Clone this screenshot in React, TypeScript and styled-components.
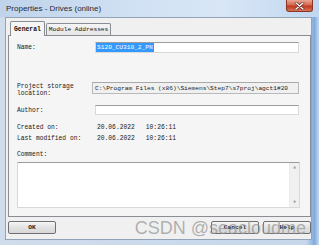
import styled, { createGlobalStyle } from "styled-components";

const GlobalStyle = createGlobalStyle`
    * {
        box-sizing: border-box;
    }
    body {
        margin: 0;
        background: #ffffff;
    }
`;

export default function App() {
    return (
        <>
            <GlobalStyle />
            <Window>
                <TitleBar>
                    <Title>Properties - Drives (online)</Title>
                    <CloseButton aria-label="Close">
                        <svg width="11" height="8" viewBox="0 0 11 8">
                            <path d="M2 1 L9 7 M9 1 L2 7" stroke="#5a1a10" strokeWidth="2.6" strokeLinecap="round" />
                            <path d="M2 1 L9 7 M9 1 L2 7" stroke="#ffffff" strokeWidth="1.5" strokeLinecap="round" />
                        </svg>
                    </CloseButton>
                </TitleBar>
                <ClientArea>
                    <TabStrip>
                        <Tab $active>General</Tab>
                        <Tab>Module Addresses</Tab>
                    </TabStrip>
                    <TabPanel>
                        <Row $top={6} $h={11}>
                            <Label>Name:</Label>
                            <Field $w={204}>
                                <Selected>S120_CU310_2_PN</Selected>
                            </Field>
                        </Row>
                        <Row $top={29} $h={12}>
                            <Label $w={75} $stacked>
                                Project storage
                                <br />
                                location:
                            </Label>
                            <Field $w={207} $readOnly>
                                {"C:\\Program Files (x86)\\Siemens\\Step7\\s7proj\\agct1#20"}
                            </Field>
                        </Row>
                        <Row $top={11} $h={10}>
                            <Label>Author:</Label>
                            <Field $w={204} />
                        </Row>
                        <Row $top={8} $h={9}>
                            <Label $w={80}>Created on:</Label>
                            <Stamp>
                                <span>20.06.2022</span>
                                <span>10:26:11</span>
                            </Stamp>
                        </Row>
                        <Row $top={2} $h={9}>
                            <Label $w={80}>Last modified on:</Label>
                            <Stamp>
                                <span>20.06.2022</span>
                                <span>10:26:11</span>
                            </Stamp>
                        </Row>
                        <Row $top={7} $h={9}>
                            <Label>Comment:</Label>
                        </Row>
                        <CommentBox>
                            <CommentText />
                            <ScrollBar>
                                <Arrow>▲</Arrow>
                                <Arrow>▼</Arrow>
                            </ScrollBar>
                        </CommentBox>
                    </TabPanel>
                    <ButtonRow>
                        <DialogButton>OK</DialogButton>
                        <RightButtons>
                            <DialogButton>Cancel</DialogButton>
                            <DialogButton>Help</DialogButton>
                        </RightButtons>
                    </ButtonRow>
                </ClientArea>
                <Watermark>CSDN @seacloudme</Watermark>
            </Window>
        </>
    );
}

const Window = styled.div`
    position: relative;
    width: 319px;
    height: 245px;
    overflow: hidden;
    display: flex;
    flex-direction: column;
    padding: 0 7px 5px 5px;
    background: linear-gradient(
        to right,
        #cfdcec 0,
        #c6d7eb 96%,
        #9fbfe4 97.5%,
        #7fa9dc 98.5%,
        #c4d8f0 100%
    );
`;

const TitleBar = styled.div`
    height: 17px;
    flex: 0 0 17px;
    margin: 0 -7px 0 -5px;
    padding-left: 6px;
    display: flex;
    justify-content: space-between;
    align-items: flex-start;
    background: linear-gradient(to right, #bfd3eb 0, #d2e2f4 45%, #d8e6f6 70%, #c1d7f0 100%);
`;

const Title = styled.div`
    padding-top: 4px;
    font-family: "Liberation Sans", Arial, sans-serif;
    font-size: 8px;
    line-height: 10px;
    color: #1e2a38;
`;

const CloseButton = styled.div`
    width: 27px;
    height: 12px;
    margin-right: 6px;
    display: flex;
    align-items: center;
    justify-content: center;
    border: 1px solid #8d3424;
    border-top: none;
    border-radius: 0 0 3px 3px;
    background: linear-gradient(to bottom, #e9a694 0, #d46a52 45%, #c1391f 55%, #d7735c 100%);
`;

const ClientArea = styled.div`
    flex: 1;
    display: flex;
    flex-direction: column;
    border: 1px solid #92a3b8;
    background: #f0f0f0;
`;

const TabStrip = styled.div`
    display: flex;
    align-items: flex-end;
    height: 15px;
    margin: 3px 0 0 4px;
`;

const Tab = styled.div<{ $active?: boolean }>`
    position: relative;
    z-index: ${(p) => (p.$active ? 1 : 0)};
    height: ${(p) => (p.$active ? 15 : 12)}px;
    margin-bottom: ${(p) => (p.$active ? 0 : 1)}px;
    padding: 0 ${(p) => (p.$active ? 3 : 2)}px;
    display: flex;
    align-items: center;
    border: 1px solid #8a8d94;
    border-bottom: none;
    border-radius: 2px 2px 0 0;
    background: ${(p) => (p.$active ? "#f5f5f5" : "linear-gradient(#f4f4f4, #e6e6e6)")};
    font-family: "Liberation Mono", monospace;
    font-size: ${(p) => (p.$active ? 6.4 : 6.2)}px;
    font-weight: ${(p) => (p.$active ? 700 : 400)};
    color: #111;
    & + & {
        margin-left: 1px;
    }
`;

const TabPanel = styled.div`
    margin: -1px 0 0 2px;
    width: 303px;
    height: 182px;
    padding: 0 0 0 8px;
    border: 1px solid #8a8d94;
    background: #f5f5f5;
`;

const Row = styled.div<{ $top: number; $h: number }>`
    display: flex;
    align-items: center;
    margin-top: ${(p) => p.$top}px;
    height: ${(p) => p.$h}px;
`;

const Label = styled.div<{ $w?: number; $stacked?: boolean }>`
    width: ${(p) => p.$w ?? 78}px;
    flex: 0 0 auto;
    margin-top: ${(p) => (p.$stacked ? 4 : 0)}px;
    font-family: "Liberation Mono", monospace;
    font-size: 6.3px;
    line-height: 7px;
    color: #1a1a1a;
    white-space: nowrap;
`;

const Field = styled.div<{ $w: number; $readOnly?: boolean }>`
    width: ${(p) => p.$w}px;
    height: 100%;
    display: flex;
    align-items: center;
    padding-left: ${(p) => (p.$readOnly ? 2 : 0)}px;
    border: 1px solid ${(p) => (p.$readOnly ? "#b9b9b9" : "#d9d9d9")};
    border-top-color: ${(p) => (p.$readOnly ? "#a9a9a9" : "#9c9c9c")};
    background: ${(p) => (p.$readOnly ? "#f0f0f0" : "#ffffff")};
    font-family: "Liberation Mono", monospace;
    font-size: 6.2px;
    color: #1a1a1a;
    white-space: nowrap;
    overflow: hidden;
`;

const Selected = styled.span`
    align-self: stretch;
    display: flex;
    align-items: center;
    padding: 0 1px;
    background: #3399ff;
    color: #ffffff;
`;

const Stamp = styled.div`
    display: flex;
    gap: 11px;
    font-family: "Liberation Mono", monospace;
    font-size: 6.3px;
    color: #1a1a1a;
`;

const CommentBox = styled.div`
    display: flex;
    margin-top: 3px;
    width: 283px;
    height: 46px;
    border: 1px solid #d9d9d9;
    border-top-color: #9c9c9c;
    background: #ffffff;
`;

const CommentText = styled.div`
    flex: 1;
`;

const ScrollBar = styled.div`
    width: 10px;
    display: flex;
    flex-direction: column;
    justify-content: space-between;
    align-items: center;
    padding: 2px 0;
    background: #f0f0f0;
    border-left: 1px solid #ececec;
`;

const Arrow = styled.span`
    font-family: "DejaVu Sans", sans-serif;
    font-size: 3.5px;
    line-height: 5px;
    color: #9a9a9a;
`;

const ButtonRow = styled.div`
    display: flex;
    justify-content: space-between;
    margin: 4px 0 0 2px;
    width: 303px;
`;

const RightButtons = styled.div`
    display: flex;
    gap: 4px;
`;

const DialogButton = styled.div`
    width: 48px;
    height: 13px;
    display: flex;
    align-items: center;
    justify-content: center;
    border: 1px solid #707070;
    border-radius: 2px;
    background: linear-gradient(#f6f6f6, #e2e2e2 50%, #d8d8d8);
    font-family: "Liberation Mono", monospace;
    font-size: 6.2px;
    font-weight: 700;
    color: #222;
`;

const Watermark = styled.div`
    position: absolute;
    right: 13px;
    top: 218px;
    font-family: "Liberation Sans", Arial, sans-serif;
    font-size: 18px;
    line-height: 20px;
    color: rgba(150, 150, 150, 0.72);
    white-space: nowrap;
    pointer-events: none;
`;
